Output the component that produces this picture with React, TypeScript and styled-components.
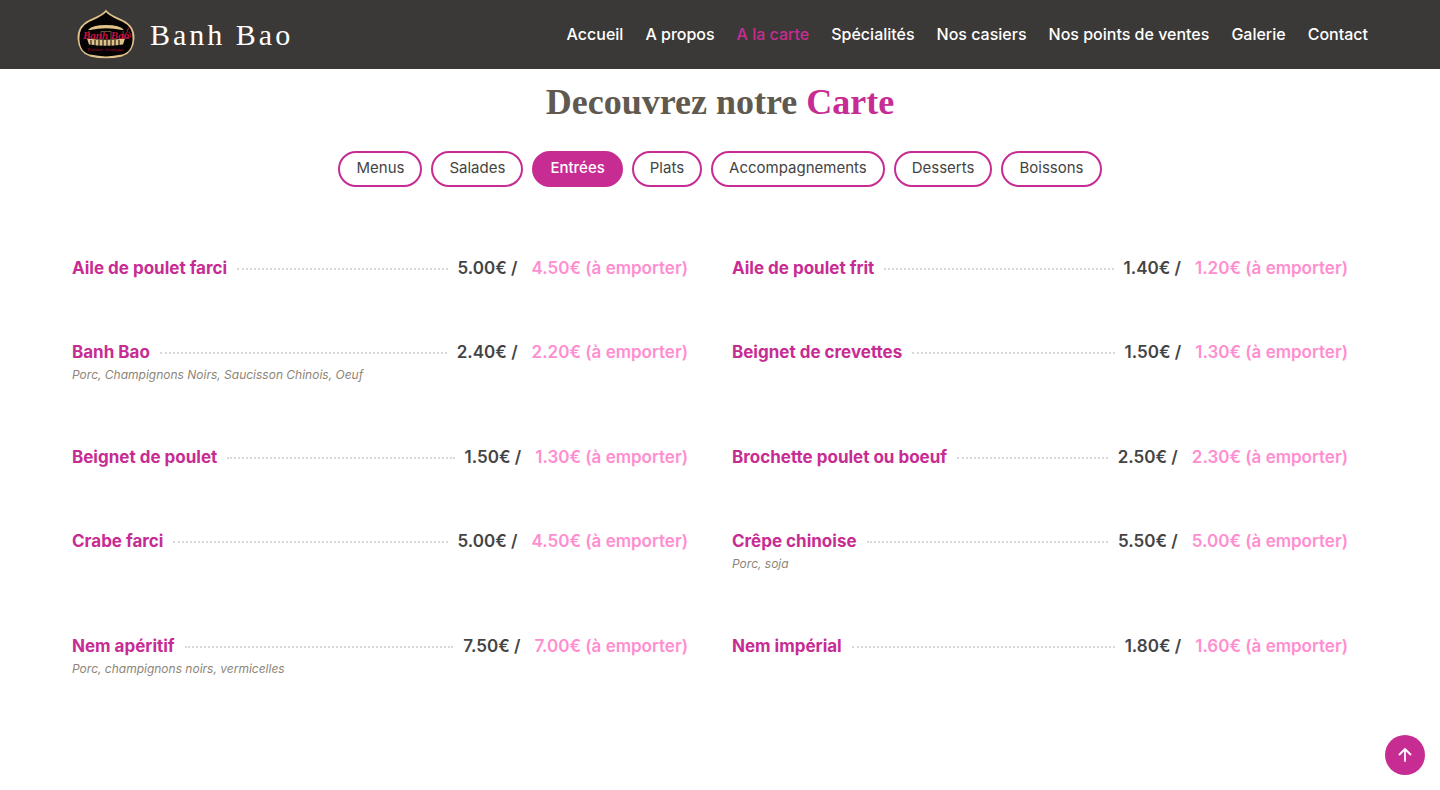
import React, { useState } from 'react';
import styled, { createGlobalStyle } from 'styled-components';

const sans = 'Inter, "Noto Sans", sans-serif';
const serif = '"Liberation Serif", "DejaVu Serif", serif';
const pink = '#c72c93';

const GlobalStyle = createGlobalStyle`
  * { box-sizing: border-box; }
  body { margin: 0; background: #fff; color: #444; font-family: ${sans}; }
  a { text-decoration: none; }
`;

const Header = styled.header`
  display: flex;
  align-items: center;
  justify-content: space-between;
  min-height: 69px;
  padding: 0 72px;
  background: #3b3937;
`;

const Brand = styled.a`
  display: flex;
  align-items: center;
  gap: 10px;
  color: #fff;
  font-family: ${serif};
  font-size: 30px;
  line-height: 40px;
  letter-spacing: 3px;
`;

const Emblem = styled.svg`
  display: block;
  letter-spacing: 0;
`;

const Nav = styled.nav`
  display: flex;
  gap: 22px;
  padding-bottom: 2px;
`;

const NavLink = styled.a<{ $active?: boolean }>`
  color: ${(p) => (p.$active ? pink : '#fff')};
  font-size: 16px;
  font-weight: 500;
  line-height: 24px;
  white-space: nowrap;
`;

const Title = styled.h1`
  margin: 0;
  padding-top: 12px;
  color: #5f5950;
  font-family: ${serif};
  font-size: 36px;
  font-weight: 700;
  line-height: 42px;
  text-align: center;
`;

const Accent = styled.span`
  color: ${pink};
`;

const Filters = styled.div`
  display: flex;
  flex-wrap: wrap;
  justify-content: center;
  gap: 9px;
  padding: 28px 24px 0;
`;

const Filter = styled.button<{ $active: boolean }>`
  height: 36px;
  padding: 0 16px 2px;
  border: 2px solid ${pink};
  border-radius: 18px;
  background: ${(p) => (p.$active ? pink : '#fff')};
  color: ${(p) => (p.$active ? '#fff' : '#444')};
  font-family: ${sans};
  font-size: 15px;
  font-weight: ${(p) => (p.$active ? 500 : 400)};
  line-height: 20px;
  cursor: pointer;
`;

const Dishes = styled.ul`
  display: grid;
  grid-template-columns: 1fr 1fr;
  column-gap: 44px;
  row-gap: 60px;
  margin: 0;
  padding: 69px 92px 60px 72px;
  list-style: none;
`;

const DishLine = styled.div`
  display: flex;
  align-items: center;
  font-size: 17px;
  font-weight: 600;
  line-height: 24px;
  white-space: nowrap;
`;

const DishName = styled.a`
  color: ${pink};
  font-weight: 700;
`;

const Dots = styled.span`
  flex: 1;
  margin: 2px 10px 0;
  border-top: 2px dotted #d8d8d8;
`;

const Takeaway = styled.span`
  margin-left: 14px;
  color: #ff8ed0;
`;

const Ingredients = styled.p`
  margin: 0;
  color: #8d8577;
  font-family: ${sans};
  font-size: 12px;
  font-style: italic;
  line-height: 21px;
`;

const BackToTop = styled.a`
  position: fixed;
  right: 15px;
  bottom: 15px;
  display: flex;
  align-items: center;
  justify-content: center;
  width: 40px;
  height: 40px;
  border-radius: 50%;
  background: ${pink};
`;

const links = ['Accueil', 'A propos', 'A la carte', 'Spécialités', 'Nos casiers', 'Nos points de ventes', 'Galerie', 'Contact'];
const categories = ['Menus', 'Salades', 'Entrées', 'Plats', 'Accompagnements', 'Desserts', 'Boissons'];
const dishes = [
  { name: 'Aile de poulet farci', price: '5.00', takeaway: '4.50' },
  { name: 'Aile de poulet frit', price: '1.40', takeaway: '1.20' },
  { name: 'Banh Bao', price: '2.40', takeaway: '2.20', ingredients: 'Porc, Champignons Noirs, Saucisson Chinois, Oeuf' },
  { name: 'Beignet de crevettes', price: '1.50', takeaway: '1.30' },
  { name: 'Beignet de poulet', price: '1.50', takeaway: '1.30' },
  { name: 'Brochette poulet ou boeuf', price: '2.50', takeaway: '2.30' },
  { name: 'Crabe farci', price: '5.00', takeaway: '4.50' },
  { name: 'Crêpe chinoise', price: '5.50', takeaway: '5.00', ingredients: 'Porc, soja' },
  { name: 'Nem apéritif', price: '7.50', takeaway: '7.00', ingredients: 'Porc, champignons noirs, vermicelles' },
  { name: 'Nem impérial', price: '1.80', takeaway: '1.60' },
];

function Logo() {
  return (
    <Emblem width="68" height="52" viewBox="0 0 68 52" aria-hidden="true">
      <path
        d="M34 2C38 7 45 9 51 12C59 16 62 22 61.500 30C61 39 58 44 50 46.500C40 48.800 28 48.800 18 46.500C10 44 7 39 6.500 30C6 22 9 16 17 12C23 9 30 7 34 2Z"
        fill="#050303"
        stroke="#dfc18a"
        strokeWidth="1.800"
      />
      <path d="M16 21Q20 16 34 16Q48 16 52 21L50 21Q34 17.500 18 21Z" fill="#dfc18a" />
      <path d="M15 29.500Q34 32 53 29.500L51 35.500Q34 38 17 35.500Z" fill="#dfc18a" />
      <path d="M19 31V36M23 31V37M27 31V37M31 31V37M35 31V37M39 31V37M43 31V37M47 31V36" stroke="#050303" />
      <path d="M17 22V29M29 22.500V30M39 22.500V30M51 22V29M29 22.500H39" stroke="#8d7648" strokeWidth=".7" />
      <text x="11" y="30" fill="#c50f45" fontFamily="Liberation Serif, serif" fontSize="11" fontStyle="italic" fontWeight="700">Banh Bao</text>
      <text x="15" y="42" fill="#a80d39" fontFamily="Liberation Serif, serif" fontSize="5" fontStyle="italic">Traiteur Asiatique</text>
      <path d="M55 23.500A3 3 0 1 0 57 23.500M56 23.500Q54 21 57 19" fill="none" stroke="#c50f45" />
    </Emblem>
  );
}

export default function App() {
  const [active, setActive] = useState('Entrées');
  return (
    <>
      <GlobalStyle />
      <Header>
        <Brand href="#">
          <Logo />
          Banh Bao
        </Brand>
        <Nav>
          {links.map((l) => (
            <NavLink key={l} href="#" $active={l === 'A la carte'}>{l}</NavLink>
          ))}
        </Nav>
      </Header>
      <main>
        <Title>Decouvrez notre <Accent>Carte</Accent></Title>
        <Filters>
          {categories.map((c) => (
            <Filter key={c} type="button" $active={c === active} onClick={() => setActive(c)}>{c}</Filter>
          ))}
        </Filters>
        <Dishes>
          {dishes.map((d) => (
            <li key={d.name}>
              <DishLine>
                <DishName href="#">{d.name}</DishName>
                <Dots />
                <span>{d.price}€ /</span>
                <Takeaway>{d.takeaway}€ (à emporter)</Takeaway>
              </DishLine>
              {d.ingredients && <Ingredients>{d.ingredients}</Ingredients>}
            </li>
          ))}
        </Dishes>
      </main>
      <BackToTop href="#" aria-label="Haut de page">
        <svg width="14" height="14" viewBox="0 0 14 14" fill="none" stroke="#fff" strokeWidth="1.800" strokeLinecap="round" strokeLinejoin="round">
          <path d="M7 13V1M1.500 6.500L7 1L12.500 6.500" />
        </svg>
      </BackToTop>
    </>
  );
}
